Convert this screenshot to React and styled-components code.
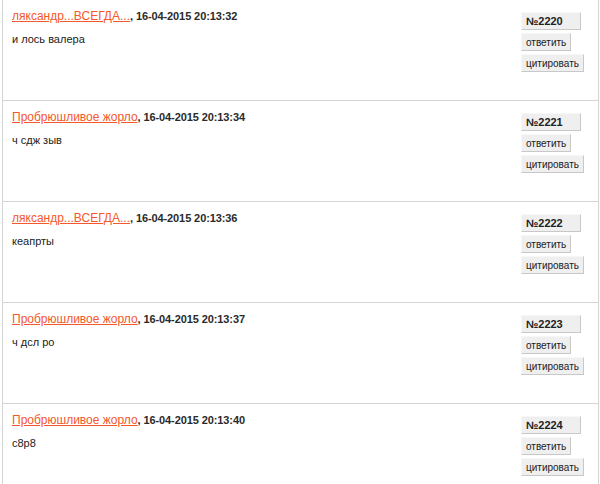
import React from "react";
import styled, { createGlobalStyle } from "styled-components";

const GlobalStyle = createGlobalStyle`
  html, body {
    margin: 0;
    padding: 0;
    background: #fff;
    font-family: Arial, "Liberation Sans", sans-serif;
  }
`;

const comments = [
  { id: 2220, author: "ляксандр...ВСЕГДА...", date: "16-04-2015 20:13:32", text: "и лось валера" },
  { id: 2221, author: "Пробрюшливое жорло", date: "16-04-2015 20:13:34", text: "ч сдж зыв" },
  { id: 2222, author: "ляксандр...ВСЕГДА...", date: "16-04-2015 20:13:36", text: "кеапрты" },
  { id: 2223, author: "Пробрюшливое жорло", date: "16-04-2015 20:13:37", text: "ч дсл ро" },
  { id: 2224, author: "Пробрюшливое жорло", date: "16-04-2015 20:13:40", text: "с8р8" },
];

const App = () => {
  return (
    <>
      <GlobalStyle />
      <Page>
        <List>
          {comments.map((c) => (
            <Row key={c.id}>
              <Body>
                <Title>
                  <Author href="#">{c.author}</Author>
                  <Date>, {c.date}</Date>
                </Title>
                <Text>{c.text}</Text>
              </Body>
              <Actions>
                <Button $bold $wide>№{c.id}</Button>
                <Button>ответить</Button>
                <Button $wide>цитировать</Button>
              </Actions>
            </Row>
          ))}
        </List>
        <Bottom />
      </Page>
    </>
  );
};

export default App;

const Page = styled.div`
  width: 600px;
  height: 484px;
  overflow: hidden;
  display: flex;
  flex-direction: column;
`;

const List = styled.div`
  margin: 0 2px 0 2px;
  width: 595px;
  border-left: 1px solid #d4d4d4;
  border-right: 1px solid #d4d4d4;
  flex: 1;
`;

const Row = styled.div`
  display: flex;
  height: 100px;
  border-bottom: 1px solid #d4d4d4;
  &:last-child {
    border-bottom: none;
  }
`;

const Body = styled.div`
  flex: 1;
  padding: 7px 0 0 9px;
`;

const Title = styled.div`
  line-height: 16px;
  white-space: nowrap;
`;

const Author = styled.a`
  font-size: 12px;
  color: #f5582c;
  text-decoration: underline;
`;

const Date = styled.span`
  font-size: 11px;
  font-weight: bold;
  letter-spacing: -0.1px;
  color: #2a2a2a;
`;

const Text = styled.div`
  margin-top: 7px;
  font-size: 11px;
  line-height: 16px;
  color: #222;
`;

const Actions = styled.div`
  width: 77px;
  display: flex;
  flex-direction: column;
  align-items: flex-start;
  gap: 3px;
  padding-top: 12px;
`;

const Button = styled.div`
  box-sizing: border-box;
  height: 18px;
  min-width: ${(p) => (p.$wide ? "60px" : "auto")};
  padding: 0 4px;
  font-size: ${(p) => (p.$bold ? "11px" : "10px")};
  line-height: 17px;
  font-weight: ${(p) => (p.$bold ? "bold" : "normal")};
  color: #222;
  background: #efefef;
  border: 1px solid #f7f7f7;
  border-right-color: #c8c8c8;
  border-bottom-color: #c8c8c8;
`;

const Bottom = styled.div`
  height: 5px;
  border-top: 1px solid #b8c0c8;
  background: #dfe6ee;
`;
